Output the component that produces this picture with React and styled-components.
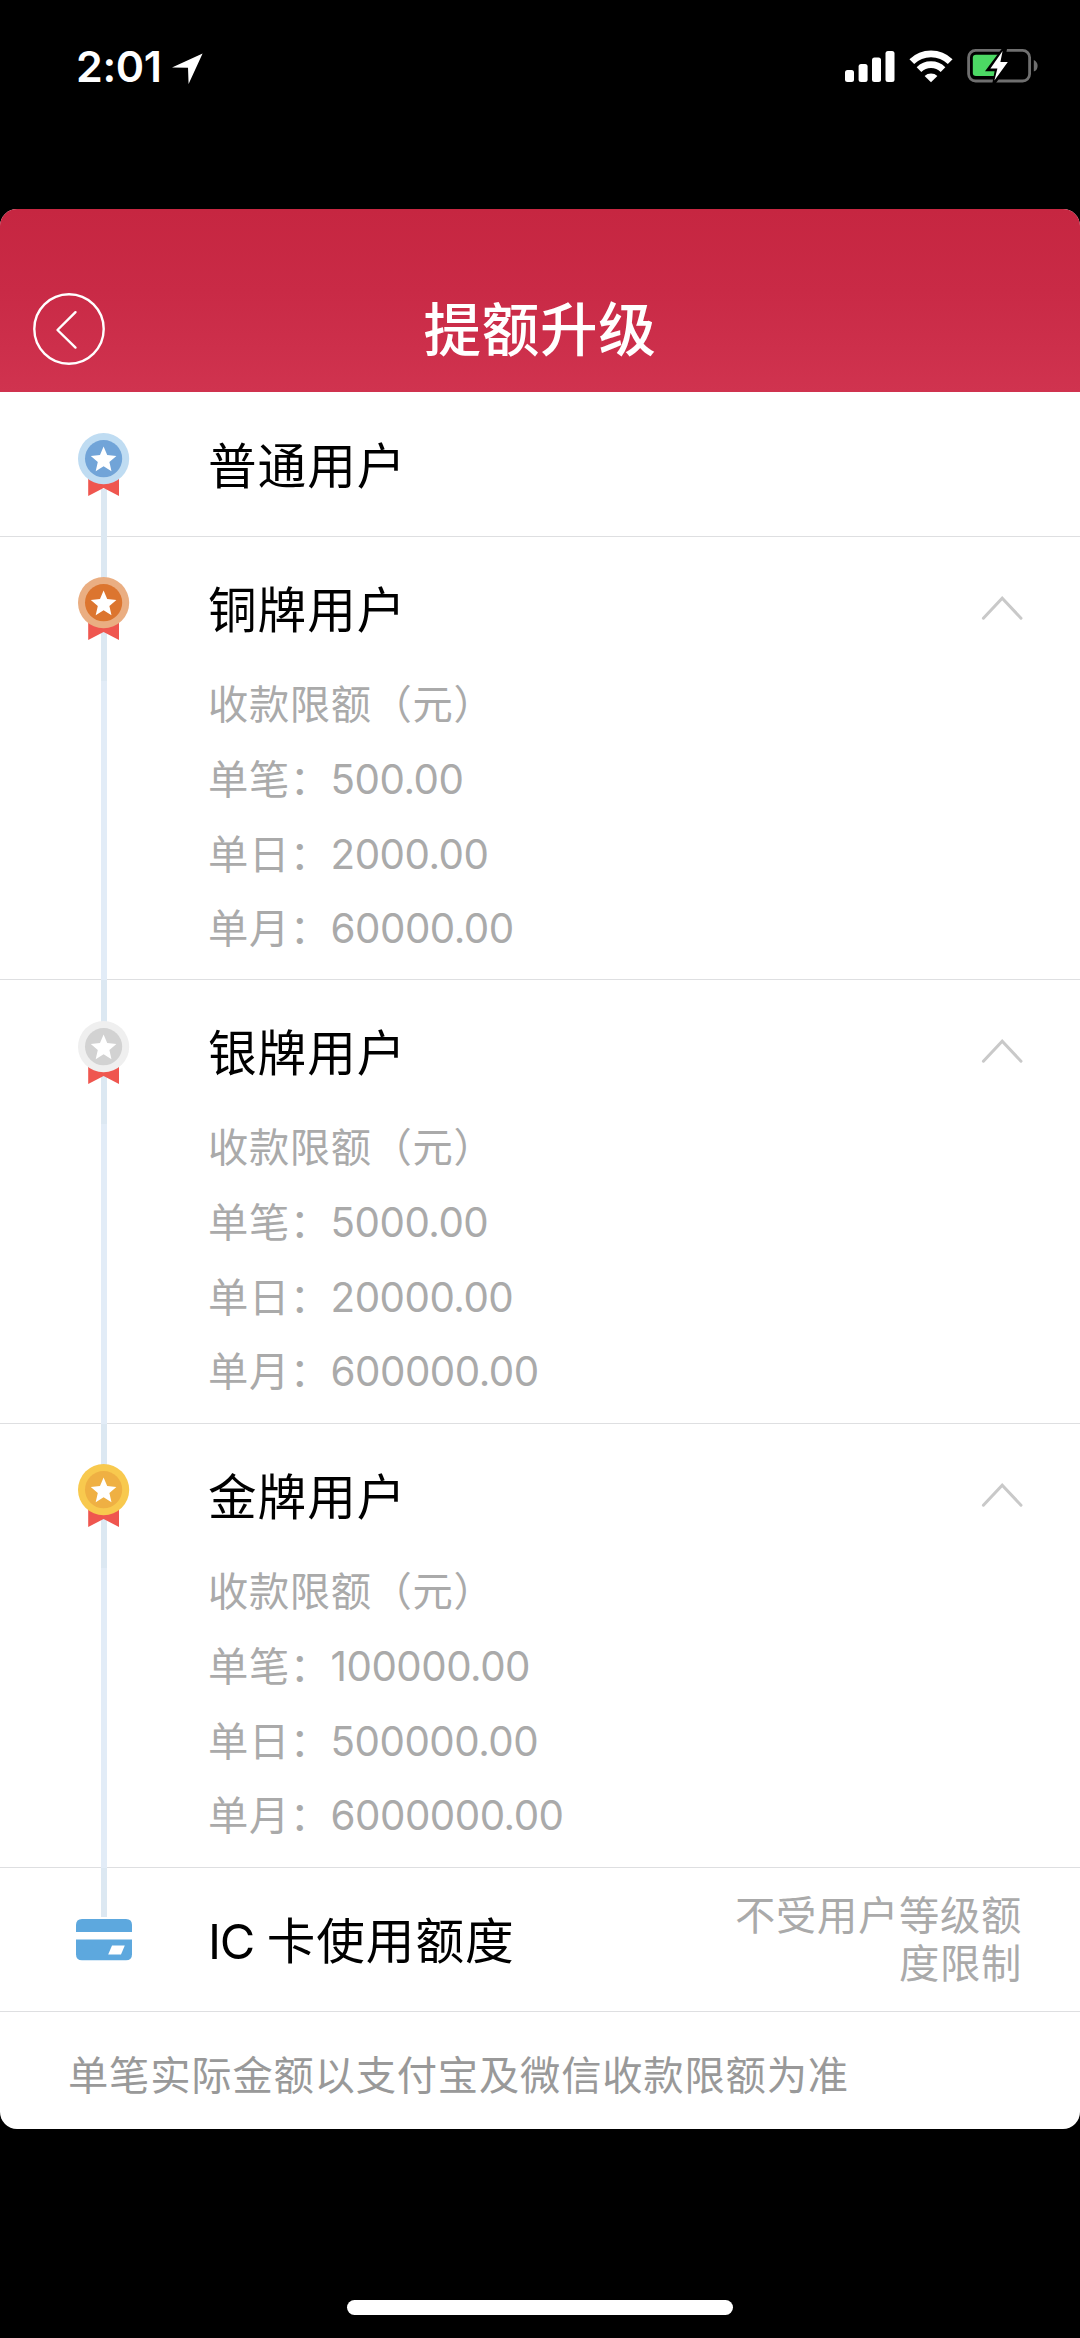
import React, { useState } from 'react';
import styled, { createGlobalStyle, css } from 'styled-components';

const GlobalStyle = createGlobalStyle`
  * {
    box-sizing: border-box;
  }

  body {
    margin: 0;
    background: #000;
    font-family: Inter, "Noto Sans CJK SC", sans-serif;
  }
`;

const Screen = styled.div`
  display: flex;
  flex-direction: column;
  width: 1080px;
  height: 2338px;
  background: #000;
  overflow: hidden;
`;

const StatusBar = styled.div`
  display: flex;
  justify-content: space-between;
  align-items: flex-start;
  height: 209px;
  padding: 39px 42px 0 76px;
  color: #fff;
`;

const Clock = styled.div`
  display: flex;
  align-items: center;
  gap: 11px;
  font-size: 43px;
  font-weight: 600;
  line-height: 54px;
  letter-spacing: -0.4px;

  svg {
    margin-top: 5px;
  }
`;

const StatusIcons = styled.div`
  display: flex;
  align-items: center;
  gap: 14px;
  padding-top: 10px;
`;

const Card = styled.div`
  display: flex;
  flex-direction: column;
  height: 1920px;
  border-radius: 17px;
  background: #fff;
  overflow: hidden;
`;

const Header = styled.header`
  display: grid;
  grid-template-columns: 72px 1fr 72px;
  align-items: center;
  height: 183px;
  padding: 57px 33px 0;
  background: linear-gradient(#c62641, #c92a46 45%, #d0334f);
`;

const BackButton = styled.button`
  display: flex;
  width: 72px;
  height: 72px;
  padding: 0;
  border: 0;
  background: none;
  cursor: pointer;
`;

const Title = styled.h1`
  margin: 0;
  padding-top: 1px;
  color: #fff;
  font-size: 57.6px;
  font-weight: 500;
  line-height: 80px;
  letter-spacing: 0.7px;
  text-align: center;
`;

const Row = styled.section`
  display: grid;
  grid-template-columns: 208px 1fr;
  height: ${({ $height }) => $height}px;
  border-bottom: 1px solid #dedfe1;
`;

const Rail = styled.div`
  position: relative;
  padding: ${({ $top }) => $top}px 0 0 ${({ $left }) => $left}px;

  svg {
    position: relative;
    display: block;
  }

  /* the line joining the badges, runs over the row divider */
  &::before {
    content: '';
    position: absolute;
    left: 101px;
    top: 0;
    bottom: -1px;
    width: 6px;
    background: linear-gradient(#dce8f2 144px, #e2ecf7 144px);
    ${({ $first }) => $first && css`top: 97px;`}
    ${({ $last }) => $last && css`bottom: auto; height: 49px;`}
  }
`;

const RowBody = styled.div`
  display: flex;
  flex-direction: column;
`;

const RowHead = styled.div`
  display: flex;
  flex: none;
  justify-content: space-between;
  align-items: center;
  height: ${({ $height }) => $height || 144}px;
  padding-right: 57px;
`;

const RowTitle = styled.h2`
  margin: 0;
  padding-top: 4px;
  color: #000;
  font-size: 48.6px;
  font-weight: 400;
  line-height: 68px;
  letter-spacing: 1px;
`;

const Latin = styled.span`
  letter-spacing: -1.2px;
`;

const Toggle = styled.button`
  display: flex;
  margin-top: -2px;
  padding: 0;
  border: 0;
  background: none;
  cursor: pointer;
`;

const Limits = styled.div`
  display: flex;
  flex-direction: column;
  margin-top: -14px;
  color: #aaa;
  font-size: 40.3px;
  line-height: 75px;
  letter-spacing: 0.6px;
`;

const LimitLine = styled.div`
  display: flex;
  height: 74.8px;
`;

const Colon = styled.span`
  width: 40.8px;
  letter-spacing: 0;
`;

const Amount = styled.span`
  letter-spacing: -0.5px;
`;

const Remark = styled.p`
  width: 288px;
  margin: 0 1px 0 0;
  color: #aaa;
  font-size: 40.3px;
  line-height: 48.3px;
  letter-spacing: 0.7px;
  text-align: right;
  white-space: pre;
`;

const Note = styled.p`
  margin: 0;
  padding: 34px 68px 0;
  color: #999;
  font-size: 40.3px;
  line-height: 60px;
  letter-spacing: 0.8px;
`;

const HomeIndicator = styled.div`
  width: 386px;
  height: 15px;
  margin: 171px auto 0;
  border-radius: 8px;
  background: #fff;
`;

const LocationArrow = () => (
  <svg width="32" height="32" viewBox="0 0 32 32">
    <path d="M30.6 0.6 L0 14.4 L16 14.8 L16.6 31 Z" fill="#fff" />
  </svg>
);

const Signal = () => (
  <svg width="50" height="33" viewBox="0 0 50 33" fill="#fff">
    <rect x="0" y="20" width="9" height="12" rx="2.5" />
    <rect x="13.6" y="14" width="9" height="18" rx="2.5" />
    <rect x="27" y="7.6" width="9" height="24.4" rx="2.5" />
    <rect x="40.5" y="1" width="9" height="31" rx="2.5" />
  </svg>
);

const Wifi = () => (
  <svg width="44" height="33" viewBox="0 0 44 33">
    <path d="M2.8 11.6 A27.5 27.5 0 0 1 41.2 11.6" fill="none" stroke="#fff" strokeWidth="6.8" />
    <path d="M10 19.6 A17 17 0 0 1 34 19.6" fill="none" stroke="#fff" strokeWidth="6.6" />
    <path d="M15.6 26 A9.6 9.6 0 0 1 28.4 26 L22 32.3 Z" fill="#fff" />
  </svg>
);

const Battery = () => (
  <svg width="71" height="34" viewBox="0 0 71 34">
    <rect x="1.6" y="1.4" width="61" height="30.6" rx="7" fill="none" stroke="#6f6f6f" strokeWidth="2.8" />
    <path d="M66.8 11 Q70.6 12.8 70.6 17 Q70.6 21 66.8 22.6 Z" fill="#6f6f6f" />
    <path d="M9 5.8 H36 L27 27 H9 Q5.8 27 5.8 24 V8.8 Q5.8 5.8 9 5.8 Z" fill="#4cd964" />
    <path d="M34.6 0 H40 L38 10 H46 L29 34 H25.4 L27.6 22.2 H18 Z" fill="#000" />
    <path d="M35.6 2 L23.4 19.4 H30.4 L27.4 31.4 L40.8 13 H33.4 Z" fill="#fff" />
  </svg>
);

const BackIcon = () => (
  <svg width="72" height="72" viewBox="0 0 72 72" fill="none" stroke="#fff">
    <circle cx="36" cy="36" r="34.7" strokeWidth="2.4" />
    <path d="M42.5 19.2 L24.5 37 L42.5 54.6" strokeWidth="2.4" strokeLinecap="round" strokeLinejoin="round" />
  </svg>
);

const ChevronUp = () => (
  <svg width="42" height="26" viewBox="0 0 42 26" fill="none">
    <path d="M2.4 23.2 L21.2 3.2 L40 23.2" stroke="#c9c9c9" strokeWidth="3" strokeLinecap="round" />
  </svg>
);

const Medal = ({ outer, inner }) => (
  <svg width="52" height="64" viewBox="0 0 52 64">
    <path d="M10.2 42 H41 V63 L25.6 55 L10.2 63 Z" fill="#ef564f" />
    <circle cx="25.6" cy="25.7" r="25.6" fill={outer} />
    <circle cx="25.6" cy="25.7" r="18.6" fill={inner} />
    <path
      d="M25.6 13.6 L29.2 22.1 L38.4 23 L31.4 29 L33.5 38.2 L25.6 33.3 L17.7 38.2 L19.8 29 L12.8 23 L22 22.1 Z"
      fill="#fff"
    />
  </svg>
);

const BankCard = () => (
  <svg width="56" height="42" viewBox="0 0 56 42" fill="#5da8de">
    <path d="M0 13 V6 Q0 0 6 0 H50 Q56 0 56 6 V13 Z" />
    <path d="M0 20.5 H56 V35.3 Q56 41.3 50 41.3 H6 Q0 41.3 0 35.3 Z" />
    <path d="M36 26.5 H48.8 L45 35.5 H32.2 Z" fill="#fff" />
  </svg>
);

const TIERS = [
  {
    name: '铜牌用户',
    outer: '#eaae82',
    inner: '#dc752f',
    top: 40,
    height: 443,
    limits: [['单笔', '500.00'], ['单日', '2000.00'], ['单月', '60000.00']],
  },
  {
    name: '银牌用户',
    outer: '#efefef',
    inner: '#d2d2d2',
    top: 41,
    height: 444,
    limits: [['单笔', '5000.00'], ['单日', '20000.00'], ['单月', '600000.00']],
  },
  {
    name: '金牌用户',
    outer: '#f8c94e',
    inner: '#efb043',
    top: 40,
    height: 444,
    limits: [['单笔', '100000.00'], ['单日', '500000.00'], ['单月', '6000000.00']],
  },
];

const Tier = ({ tier }) => {
  const [open, setOpen] = useState(true);

  return (
    <Row $height={open ? tier.height : 144}>
      <Rail $top={tier.top} $left={78}>
        <Medal outer={tier.outer} inner={tier.inner} />
      </Rail>
      <RowBody>
        <RowHead>
          <RowTitle>{tier.name}</RowTitle>
          <Toggle onClick={() => setOpen(!open)}>
            <ChevronUp />
          </Toggle>
        </RowHead>
        {open && (
          <Limits>
            <LimitLine>收款限额（元）</LimitLine>
            {tier.limits.map(([label, amount]) => (
              <LimitLine key={label}>
                {label}
                <Colon>：</Colon>
                <Amount>{amount}</Amount>
              </LimitLine>
            ))}
          </Limits>
        )}
      </RowBody>
    </Row>
  );
};

const App = () => (
  <>
    <GlobalStyle />
    <Screen>
      <StatusBar>
        <Clock>
          2:01
          <LocationArrow />
        </Clock>
        <StatusIcons>
          <Signal />
          <Wifi />
          <Battery />
        </StatusIcons>
      </StatusBar>
      <Card>
        <Header>
          <BackButton>
            <BackIcon />
          </BackButton>
          <Title>提额升级</Title>
        </Header>
        <Row $height={145}>
          <Rail $first $top={41} $left={78}>
            <Medal outer="#bfdcf2" inner="#71a4d8" />
          </Rail>
          <RowBody>
            <RowHead $height={146}>
              <RowTitle>普通用户</RowTitle>
            </RowHead>
          </RowBody>
        </Row>
        {TIERS.map((tier) => (
          <Tier key={tier.name} tier={tier} />
        ))}
        <Row $height={144}>
          <Rail $last $top={51} $left={76}>
            <BankCard />
          </Rail>
          <RowBody>
            <RowHead>
              <RowTitle>
                <Latin>IC </Latin>
                卡使用额度
              </RowTitle>
              <Remark>{'不受用户等级额\n度限制'}</Remark>
            </RowHead>
          </RowBody>
        </Row>
        <Note>单笔实际金额以支付宝及微信收款限额为准</Note>
      </Card>
      <HomeIndicator />
    </Screen>
  </>
);

export default App;
